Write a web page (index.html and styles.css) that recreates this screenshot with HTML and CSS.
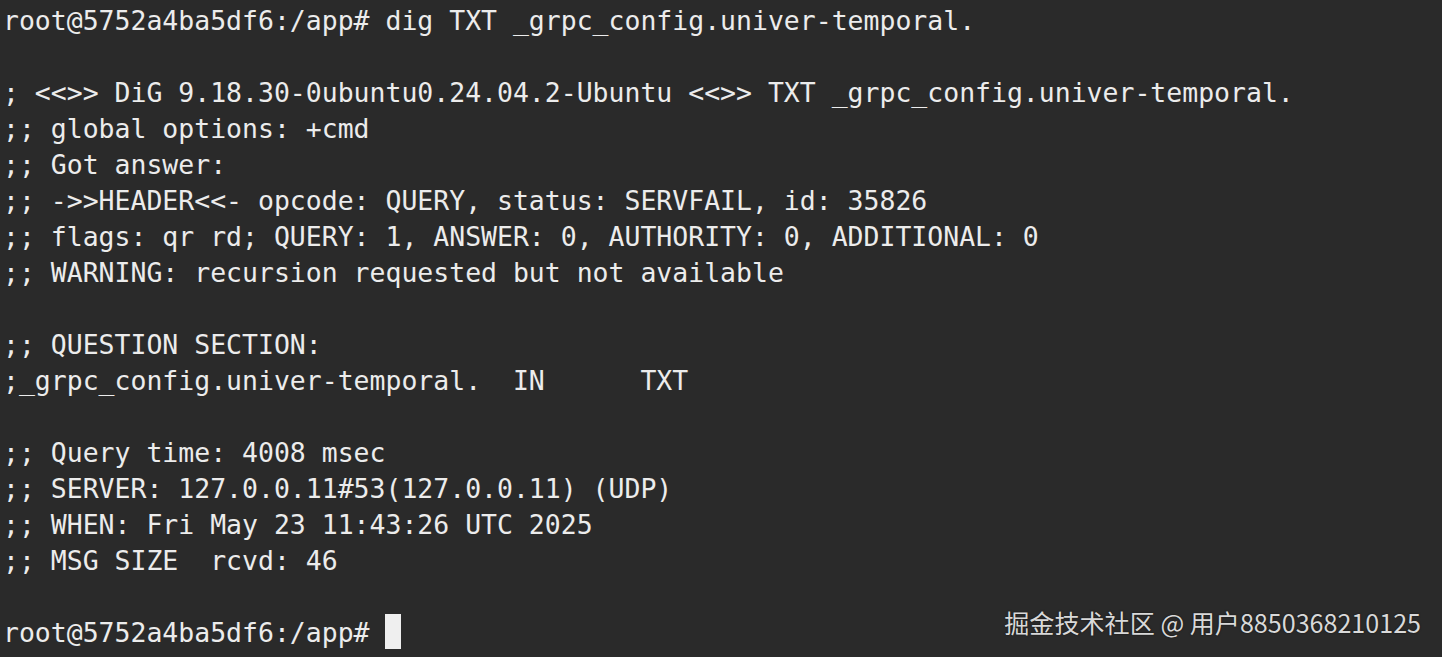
FILE: index.html
```html
<!DOCTYPE html>
<html lang="en">
<head>
<meta charset="utf-8">
<title>Terminal</title>
<link rel="stylesheet" href="styles.css">
</head>
<body>
<main class="terminal">
<div class="output">
<div class="line">root@5752a4ba5df6:/app# dig TXT _grpc_config.univer-temporal.</div>
<div class="line"></div>
<div class="line">; &lt;&lt;&gt;&gt; DiG 9.18.30-0ubuntu0.24.04.2-Ubuntu &lt;&lt;&gt;&gt; TXT _grpc_config.univer-temporal.</div>
<div class="line">;; global options: +cmd</div>
<div class="line">;; Got answer:</div>
<div class="line">;; -&gt;&gt;HEADER&lt;&lt;- opcode: QUERY, status: SERVFAIL, id: 35826</div>
<div class="line">;; flags: qr rd; QUERY: 1, ANSWER: 0, AUTHORITY: 0, ADDITIONAL: 0</div>
<div class="line">;; WARNING: recursion requested but not available</div>
<div class="line"></div>
<div class="line">;; QUESTION SECTION:</div>
<div class="line">;_grpc_config.univer-temporal.  IN      TXT</div>
<div class="line"></div>
<div class="line">;; Query time: 4008 msec</div>
<div class="line">;; SERVER: 127.0.0.11#53(127.0.0.11) (UDP)</div>
<div class="line">;; WHEN: Fri May 23 11:43:26 UTC 2025</div>
<div class="line">;; MSG SIZE  rcvd: 46</div>
<div class="line"></div>
<div class="line">root@5752a4ba5df6:/app# <span class="cursor"></span></div>
</div>
<div class="watermark">掘金技术社区 @ 用户8850368210125</div>
</main>
</body>
</html>
```
FILE: styles.css
```css
html, body {
  margin: 0;
  padding: 0;
  background: #2a2a2a;
  height: 100%;
}
.terminal {
  position: relative;
  height: 657px;
  overflow: hidden;
  padding: 3px 3px 0;
  box-sizing: border-box;
}
.output {
  display: flex;
  flex-direction: column;
  align-items: flex-start;
  font-family: "DejaVu Sans Mono", "Liberation Mono", monospace;
  font-size: 26.47px;
  line-height: 36px;
  color: #ececec;
}
.line {
  white-space: pre;
  min-height: 36px;
}
.cursor {
  display: inline-block;
  width: 16px;
  height: 35px;
  background: #efefef;
  vertical-align: top;
  margin-top: -1px;
}
.watermark {
  position: absolute;
  right: 21px;
  bottom: 20px;
  font-family: "Noto Sans CJK SC", "Noto Sans", sans-serif;
  font-size: 25.1px;
  line-height: 30px;
  color: #d9d9d9;
  text-shadow: 0 0 2px rgba(0,0,0,0.6);
}
```
